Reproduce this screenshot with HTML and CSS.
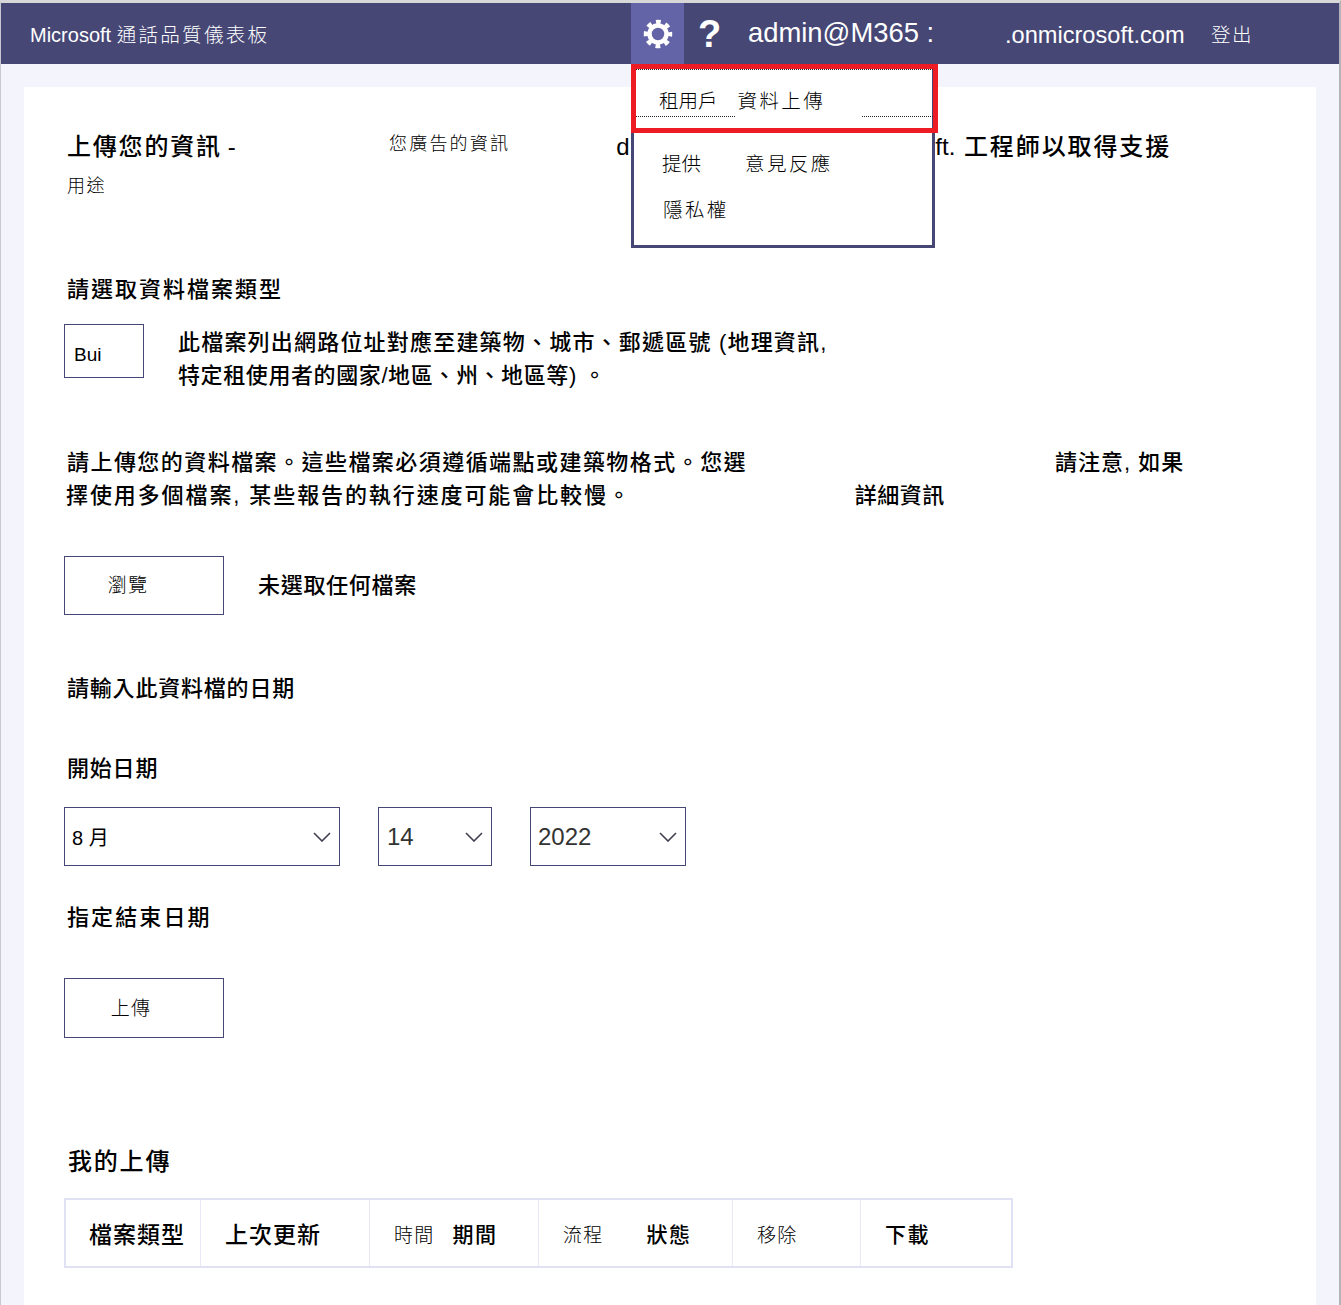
FILE: index.html
```html
<!DOCTYPE html>
<html lang="zh-Hant">

<head>
    <meta charset="UTF-8">
    <title>Microsoft 通話品質儀表板</title>
    <link rel="stylesheet" href="styles.css">
</head>

<body>
    <!-- Top bar -->
    <header class="topbar">
        <div class="brand">Microsoft <span class="brand-zh">通話品質儀表板</span></div>
        <div class="gear-tile">
            <svg width="30" height="30" viewBox="0 0 30 30">
                <circle cx="15" cy="15" r="8.500" fill="none" stroke="#fff" stroke-width="4.500" />
                <circle cx="15" cy="15" r="12" fill="none" stroke="#fff" stroke-width="4.500" stroke-dasharray="4.700 4.725" stroke-dashoffset="2.350" />
            </svg>
        </div>
        <div class="help">?</div>
        <div class="account">admin@M365 :</div>
        <div class="domain">.onmicrosoft.com</div>
        <div class="signout">登出</div>
    </header>

    <!-- Settings menu -->
    <div class="menu">
        <div class="menu-item menu-first">租用戶<span class="menu-wide first-wide">資料上傳</span></div>
        <div class="menu-item menu-second">提供<span class="menu-wide second-wide">意見反應</span></div>
        <div class="menu-item menu-third"><span class="menu-wide">隱私權</span></div>
    </div>
    <div class="highlight">
        <div class="dots-top"></div>
        <div class="dots-bottom">
            <span class="dots-left"></span>
            <span class="dots-right"></span>
        </div>
    </div>

    <main class="card">
        <h1 class="title">
            <span class="title-main">上傳您的資訊<span class="title-dash">-</span></span>
            <span class="title-small">您廣告的資訊</span>
            <span class="title-d">d</span>
            <span class="title-end"><span class="title-ft">ft.</span> 工程師以取得支援</span>
        </h1>
        <p class="purpose">用途</p>

        <h2 class="label type-label">請選取資料檔案類型</h2>
        <div class="type-row">
            <div class="type-box">Bui</div>
            <p class="type-text"><span class="type-line-a">此檔案列出網路位址對應至建築物、城市、郵遞區號 (地理資訊,</span><br><span class="type-line-b">特定租使用者的國家/地區、州、地區等) 。</span></p>
        </div>

        <p class="notice">
            <span class="notice-a">請上傳您的資料檔案。這些檔案必須遵循端點或建築物格式。您選</span><span class="notice-b">請注意, 如果</span><br>
            <span class="notice-c">擇使用多個檔案, 某些報告的執行速度可能會比較慢。</span><span class="notice-d">詳細資訊</span>
        </p>

        <div class="file-row">
            <div class="btn">瀏覽</div>
            <span class="file-text">未選取任何檔案</span>
        </div>

        <h2 class="label date-label">請輸入此資料檔的日期</h2>
        <h2 class="label start-label">開始日期</h2>

        <div class="date-row">
            <div class="select select-month">
                <span class="select-zh">8 月</span>
                <svg width="18" height="10" viewBox="0 0 18 10"><path d="M1 1l8 8 8-8" fill="none" stroke="#3f3f4f" stroke-width="1.6" /></svg>
            </div>
            <div class="select select-day">
                <span>14</span>
                <svg width="18" height="10" viewBox="0 0 18 10"><path d="M1 1l8 8 8-8" fill="none" stroke="#3f3f4f" stroke-width="1.6" /></svg>
            </div>
            <div class="select select-year">
                <span>2022</span>
                <svg width="18" height="10" viewBox="0 0 18 10"><path d="M1 1l8 8 8-8" fill="none" stroke="#3f3f4f" stroke-width="1.6" /></svg>
            </div>
        </div>

        <h2 class="label end-label">指定結束日期</h2>
        <div class="btn btn-upload">上傳</div>

        <h2 class="uploads-title">我的上傳</h2>
        <div class="table">
            <div class="cell bold first">檔案類型</div>
            <div class="cell bold">上次更新</div>
            <div class="cell small">時間<b class="cell-b">期間</b></div>
            <div class="cell small">流程<b class="cell-c">狀態</b></div>
            <div class="cell small">移除</div>
            <div class="cell small"><b>下載</b></div>
        </div>
    </main>
</body>

</html>
```

FILE: styles.css
```css
* {
    box-sizing: border-box;
}

body {
    margin: 0;
    height: 1305px;
    overflow: hidden;
    background-color: #f3f4fc;
    border-top: 3px solid #d8d8d8;
    border-left: 1px solid #c8c8d0;
    border-right: 2px solid #b4b4b8;
    font-family: "Liberation Sans", "Noto Sans CJK TC", sans-serif;
    color: #000;
    position: relative;
}

/* Top bar */
.topbar {
    display: flex;
    align-items: center;
    height: 61px;
    background-color: #464775;
    color: #fff;
}

.brand {
    margin-left: 29px;
    width: 601px;
    font-size: 20px;
}

.brand-zh {
    font-size: 19.500px;
    font-weight: 300;
    letter-spacing: 2.300px;
}

.gear-tile {
    display: flex;
    align-items: center;
    justify-content: center;
    width: 53px;
    height: 61px;
    background-color: #6264a7;
}

.help {
    width: 50px;
    margin-left: 14px;
    margin-top: 2px;
    font-size: 38px;
    font-weight: bold;
}

.account {
    width: 257px;
    margin-top: -2px;
    font-size: 27.400px;
}

.domain {
    width: 206px;
    margin-top: 3px;
    font-size: 23.600px;
}

.signout {
    font-size: 19.500px;
    font-weight: 300;
    letter-spacing: 1.500px;
}

/* Settings menu */
.menu {
    position: absolute;
    z-index: 2;
    left: 630px;
    top: 61px;
    width: 304px;
    height: 184px;
    background-color: #fff;
    border: 3px solid #464775;
    font-size: 19.500px;
    font-weight: 300;
}

.menu-item {
    position: absolute;
    white-space: nowrap;
}

.menu-first {
    left: 25px;
    top: 18px;
}

.menu-second {
    left: 28px;
    top: 81px;
}

.menu-third {
    left: 29px;
    top: 127px;
}

.menu-wide {
    letter-spacing: 2.400px;
}

.first-wide {
    margin-left: 20px;
}

.second-wide {
    margin-left: 44px;
}

.highlight {
    position: absolute;
    z-index: 3;
    left: 630px;
    top: 61px;
    width: 307px;
    height: 69px;
    border: 5px solid #ed1c24;
}

.dots-top {
    border-top: 1px dotted #222;
}

.dots-bottom {
    display: flex;
    justify-content: space-between;
    margin-top: 46px;
}

.dots-left {
    width: 99px;
    border-top: 1px dotted #222;
}

.dots-right {
    width: 71px;
    border-top: 1px dotted #222;
}

/* Main card */
.card {
    position: absolute;
    left: 23px;
    top: 84px;
    width: 1292px;
    height: 1218px;
    padding-left: 43px;
    background-color: #fff;
}

.title {
    display: flex;
    align-items: baseline;
    height: 44px;
    margin: 40px 0 0;
    font-size: 24px;
    font-weight: 500;
    letter-spacing: 1.800px;
    white-space: nowrap;
}

.title-main {
    width: 171px;
}

.title-dash {
    margin-left: 6px;
}

.title-small {
    position: relative;
    top: -5px;
    margin-left: 151px;
    font-size: 18px;
    font-weight: 300;
    letter-spacing: 2.200px;
}

.title-d {
    margin-left: 106px;
    font-weight: 400;
}

.title-end {
    margin-left: 304px;
    letter-spacing: 1.900px;
}

.title-ft {
    letter-spacing: 0;
}

.purpose {
    margin: 0;
    font-size: 18px;
    font-weight: 300;
    letter-spacing: 1.600px;
}

.label {
    margin: 0;
    font-size: 22px;
    font-weight: 500;
    letter-spacing: 2px;
}

.type-label {
    margin-top: 74px;
}

.type-row {
    display: flex;
    margin: 21px 0 0 -3px;
}

.type-box {
    width: 80px;
    height: 54px;
    padding: 19px 0 0 9px;
    border: 1px solid #464775;
    font-size: 19px;
}

.type-text {
    margin: 0 0 0 34px;
    padding-top: 2px;
    font-size: 22px;
    font-weight: 500;
    line-height: 33px;
}

.type-line-a {
    letter-spacing: 1.200px;
}

.type-line-b {
    letter-spacing: 0.600px;
}

.notice {
    margin: 54px 0 0;
    font-size: 22px;
    font-weight: 500;
    line-height: 33px;
    white-space: nowrap;
}

.notice-a {
    letter-spacing: 1.450px;
}

.notice-b {
    margin-left: 308px;
    letter-spacing: 1px;
}

.notice-c {
    margin-left: -1px;
    letter-spacing: 1.900px;
}

.notice-d {
    margin-left: 223px;
    letter-spacing: 0.500px;
}

.file-row {
    display: flex;
    align-items: center;
    margin: 44px 0 0 -3px;
}

.btn {
    display: flex;
    align-items: center;
    justify-content: center;
    width: 160px;
    height: 59px;
    padding: 0 32px 4px 0;
    border: 1px solid #464775;
    font-size: 19px;
    font-weight: 300;
    letter-spacing: 1.200px;
}

.file-text {
    margin-left: 34px;
    margin-bottom: 6px;
    font-size: 22px;
    font-weight: 500;
    letter-spacing: 0.700px;
}

.date-label {
    margin-top: 55px;
    letter-spacing: 0.800px;
}

.start-label {
    margin-top: 48px;
    letter-spacing: 0.800px;
}

.date-row {
    display: flex;
    margin: 25px 0 0 -3px;
}

.select {
    display: flex;
    align-items: center;
    justify-content: space-between;
    height: 59px;
    padding: 0 8px 0 7px;
    border: 1px solid #464775;
    font-size: 24px;
    color: #333;
}

.select-zh {
    font-size: 20px;
    color: #000;
}

.select-month {
    width: 276px;
}

.select-day {
    width: 114px;
    margin-left: 38px;
    padding-left: 8px;
}

.select-year {
    width: 156px;
    margin-left: 38px;
}

.end-label {
    margin-top: 33px;
    letter-spacing: 2.100px;
}

.btn-upload {
    height: 60px;
    margin: 47px 0 0 -3px;
    padding-right: 26px;
}

.uploads-title {
    margin: 104px 0 0 1px;
    font-size: 24px;
    font-weight: 500;
    letter-spacing: 1.800px;
}

/* Uploads table */
.table {
    display: grid;
    grid-template-columns: 134px 169px 169px 194px 128px 1fr;
    width: 949px;
    height: 70px;
    margin: 21px 0 0 -3px;
    border: 2px solid #e1e1f5;
}

.cell {
    display: flex;
    align-items: center;
    padding-left: 24px;
    border-left: 1px solid #e8e8f7;
    white-space: nowrap;
}

.cell:first-child {
    padding-left: 23px;
    border-left: 0;
}

.bold {
    font-size: 23px;
    font-weight: 500;
    letter-spacing: 1px;
}

.small {
    font-size: 19px;
    font-weight: 300;
    letter-spacing: 1.200px;
}

.small b {
    font-size: 21px;
    font-weight: 500;
    letter-spacing: 1.500px;
}

.cell-b {
    margin-left: 18px;
}

.cell-c {
    margin-left: 43px;
}
```
